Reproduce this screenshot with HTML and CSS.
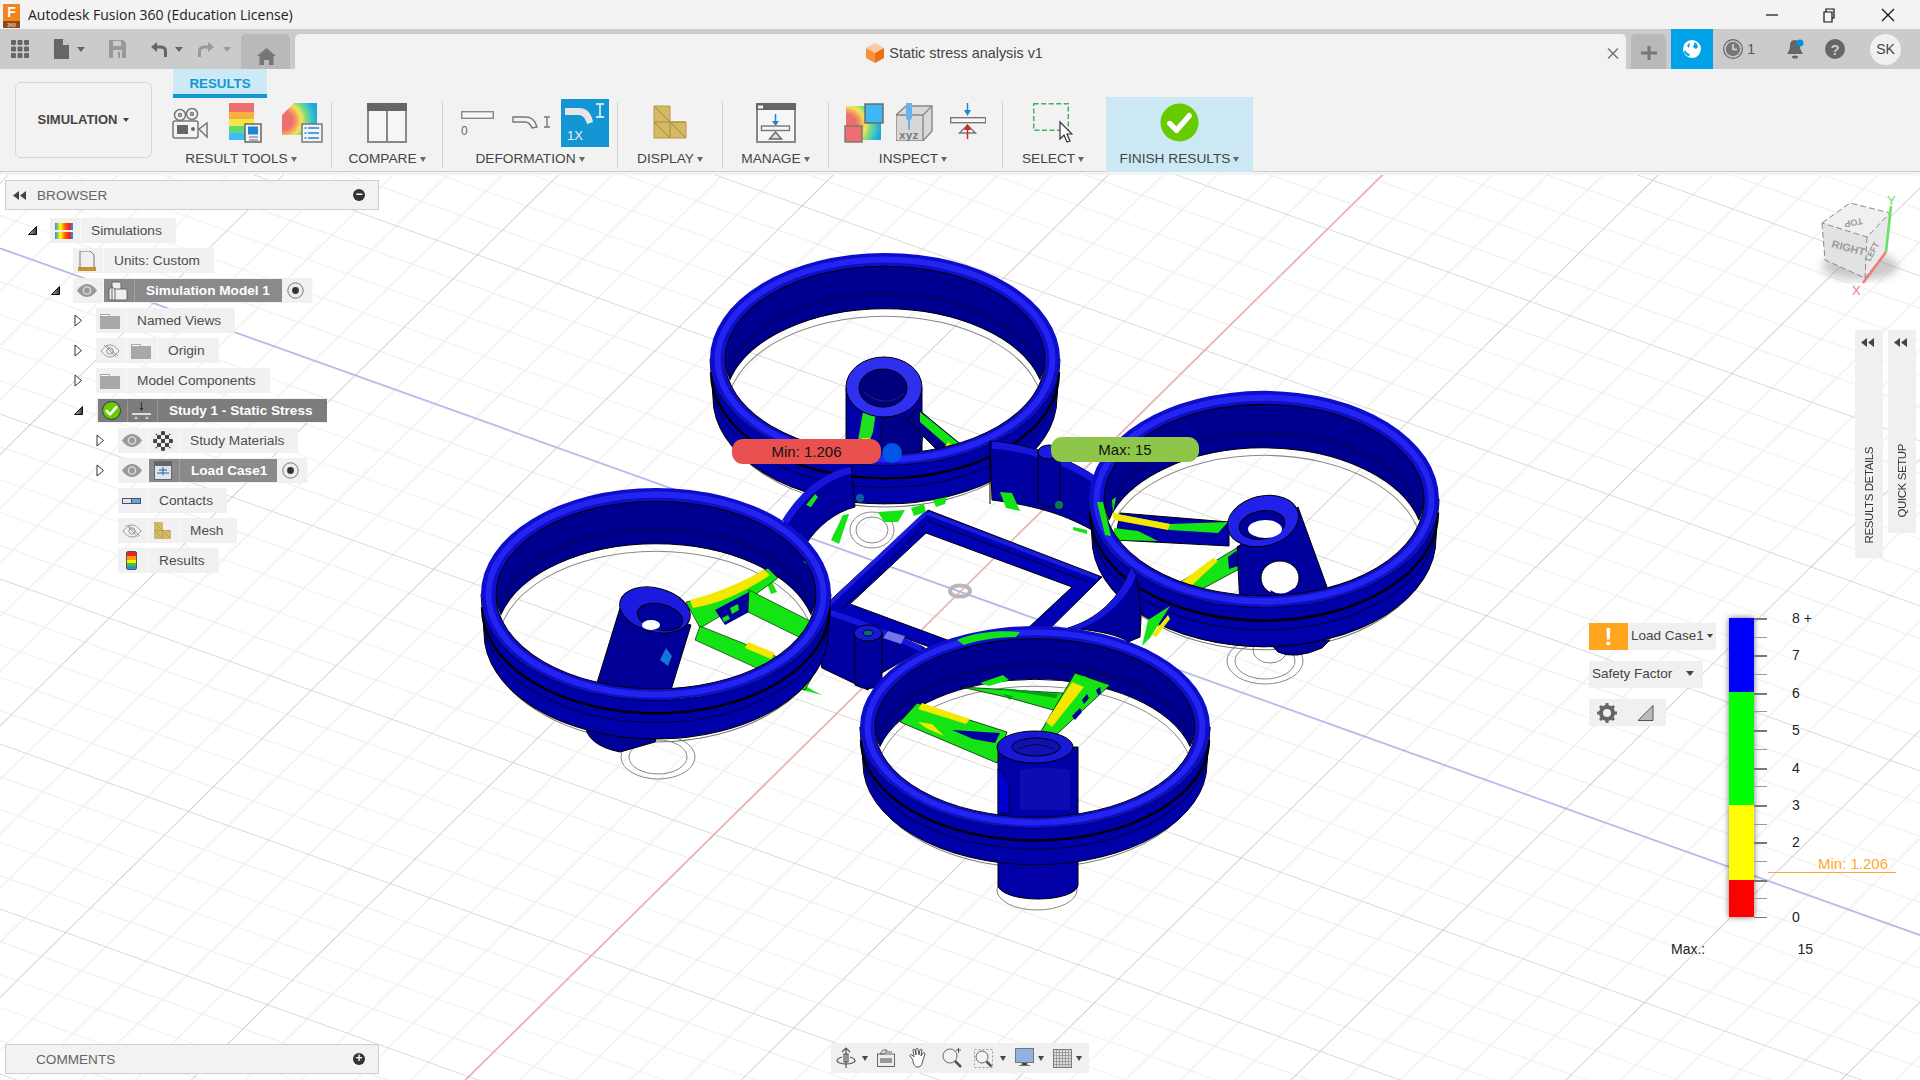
FILE: index.html
```html
<!DOCTYPE html>
<html lang="en">
<head>
  <meta charset="UTF-8">
  <title>Autodesk Fusion 360 (Education License)</title>
  <link rel="stylesheet" href="styles.css">
</head>
<body>
  <!-- shared icons -->
  <svg class="sprite" width="0" height="0">
    <defs>
      <linearGradient id="heatside" x1="0" y1="0" x2="1" y2="0">
        <stop offset="0" stop-color="#2a8fe0"/><stop offset=".3" stop-color="#ff0"/><stop offset=".55" stop-color="#f60"/><stop offset=".8" stop-color="#e22"/><stop offset="1" stop-color="#2a8fe0"/>
      </linearGradient>
      <linearGradient id="sharp" x1="0" y1="0" x2="1" y2="0">
        <stop offset="0" stop-color="#bbb"/><stop offset="1" stop-color="#333"/>
      </linearGradient>
      <radialGradient id="contour" cx="0" cy=".55" r="1">
        <stop offset=".3" stop-color="#ee6f6f"/><stop offset=".42" stop-color="#f4a35c"/><stop offset=".55" stop-color="#f3e45a"/><stop offset=".7" stop-color="#7ddc7a"/><stop offset=".85" stop-color="#3fc4c4"/><stop offset="1" stop-color="#1fa8d8"/>
      </radialGradient>
      <pattern id="checks" width="8" height="8" patternUnits="userSpaceOnUse">
        <rect width="8" height="8" fill="#eee"/><rect width="4" height="4" fill="#444"/><rect x="4" y="4" width="4" height="4" fill="#444"/>
      </pattern>
      <symbol id="eye" viewBox="0 0 20 13"><path d="M0 6.500C3 2 7 0 10 0s7 2 10 6.500C17 11 13 13 10 13S3 11 0 6.500z" fill="#999"/><circle cx="10" cy="6.500" r="3.600" fill="none" stroke="#ddd" stroke-width="1.400"/></symbol>
      <symbol id="eye-off" viewBox="0 0 20 14"><path d="M1 7c3-4 6-6 9-6s6 2 9 6c-3 4-6 6-9 6S4 11 1 7z" fill="none" stroke="#999"/><circle cx="10" cy="7" r="3.200" fill="none" stroke="#999"/><path d="M4 1l12 12M6 1l12 11" stroke="#999"/></symbol>
      <symbol id="folder" viewBox="0 0 20 16"><path d="M0 1h10v2h10v13H0z" fill="#a8a8a8"/><path d="M1 2.500h8" stroke="#fff"/></symbol>
      <symbol id="radio" viewBox="0 0 17 17"><circle cx="8.500" cy="8.500" r="7.700" fill="#ececec" stroke="#777"/><circle cx="8.500" cy="8.500" r="3.400" fill="#333"/></symbol>
      <symbol id="closed" viewBox="0 0 9 13"><path d="M1 1l6.500 5.500L1 12z" fill="#fff" stroke="#333"/></symbol>
      <symbol id="open" viewBox="0 0 9 9"><path d="M.5 8.500L8.500.5v8z" fill="url(#sharp)" stroke="#111"/></symbol>
      <symbol id="mesh" viewBox="0 0 34 34"><path d="M1 1h16v16h16v16H1z" fill="#d4b863" stroke="#b79a48"/><path d="M1 17h32M17 17v16M1 1l32 32M1 17l16 16" stroke="#a58b41" fill="none"/></symbol>
      <symbol id="rewind" viewBox="0 0 13 9"><path d="M6 0v9L0 4.500zM13 0v9L7 4.500z" fill="#444"/></symbol>
      <symbol id="tick" viewBox="0 0 40 40"><circle cx="20" cy="20" r="19.500" fill="#66cc00"/><path d="M10 21l7 7 13-15" fill="none" stroke="#fff" stroke-width="5.500" stroke-linecap="round" stroke-linejoin="round"/></symbol>

      <!-- one duct of the drone, split so hub and struts sit between the two halves -->
      <g id="ring-back">
        <ellipse cy="38" rx="170" ry="107" fill="none" stroke="#777"/>
        <ellipse cy="50" rx="158" ry="92" fill="none" stroke="#888"/>
        <path d="M-155 20A160 92 0 1 1 155 20A160 92 0 0 0-155 20z" fill="#000090" stroke="#000"/>
        <path d="M-153 6A156 87 0 0 1 153 6" fill="none" stroke="#112" stroke-width=".8"/>
      </g>
      <g id="ring-front">
        <path d="M-175 0A175 104 0 0 0 175 0L172 38A172 104 0 0 1-172 38z" fill="#0000a8" stroke="#000"/>
        <path d="M-174 13A174 104 0 0 0 174 13" fill="none" stroke="#000" stroke-width="2.400"/>
        <path d="M-173 22A173 104 0 0 0 173 22" fill="none" stroke="#001" stroke-width=".8"/>
        <path d="M-175 0A175 104 0 1 0 175 0A175 104 0 1 0-175 0zM-160 1A160 92 0 1 0 160 1A160 92 0 1 0-160 1z" fill="#0d0dcc" fill-rule="evenodd"/>
        <ellipse cy=".5" rx="167.500" ry="98" fill="none" stroke="#2424f0" stroke-width="6"/>
        <ellipse cy="1" rx="160" ry="92" fill="none" stroke="#000"/>
      </g>
    </defs>
  </svg>

  <header class="titlebar">
    <svg class="app-logo" width="17" height="24" viewBox="0 0 17 24">
      <rect width="17" height="18" rx="1" fill="#f58220"/><rect y="17" width="17" height="7" fill="#8a4a1c"/>
      <text x="8.500" y="13" class="logo-f">F</text><text x="8.500" y="23" class="logo-360">360</text>
    </svg>
    <span class="app-title">Autodesk Fusion 360 (Education License)</span>
    <div class="win-controls">
      <svg width="58" height="16" viewBox="0 0 58 16"><path d="M23 8h12" stroke="#111" stroke-width="1.200"/></svg>
      <svg width="58" height="16" viewBox="0 0 58 16"><path d="M23 5h8v10h-8zM25 5V2h8v9h-2" fill="none" stroke="#111" stroke-width="1.200"/></svg>
      <svg width="58" height="16" viewBox="0 0 58 16"><path d="M23 2l12 12M35 2L23 14" stroke="#111" stroke-width="1.200"/></svg>
    </div>
  </header>

  <nav class="tabbar">
    <svg class="tb-apps" width="18" height="18" viewBox="0 0 18 18" fill="#666">
      <rect width="5" height="5" rx="1"/><rect x="6.500" width="5" height="5" rx="1"/><rect x="13" width="5" height="5" rx="1"/>
      <rect y="6.500" width="5" height="5" rx="1"/><rect x="6.500" y="6.500" width="5" height="5" rx="1"/><rect x="13" y="6.500" width="5" height="5" rx="1"/>
      <rect y="13" width="5" height="5" rx="1"/><rect x="6.500" y="13" width="5" height="5" rx="1"/><rect x="13" y="13" width="5" height="5" rx="1"/>
    </svg>
    <svg class="tb-file" width="16" height="20" viewBox="0 0 16 20"><path d="M1 0h9l6 6v14H1z" fill="#666"/><path d="M10 0v6h6" fill="#ccc"/></svg>
    <span class="caret tb-c1"></span>
    <svg class="tb-save" width="17" height="18" viewBox="0 0 17 18"><path d="M0 0h14l3 3v15H0z" fill="#999"/><path d="M4 1h8v5H4zM4 10h9v8H4z" fill="#cbcbcb"/><path d="M9 12h2v6H9z" fill="#999"/></svg>
    <svg class="tb-undo" width="16" height="15" viewBox="0 0 16 15"><path d="M14.500 15V9C14.500 6 12 5 9 5H3" fill="none" stroke="#666" stroke-width="3"/><path d="M6 0L0 5l6 5z" fill="#666"/></svg>
    <span class="caret tb-c2"></span>
    <svg class="tb-redo" width="16" height="15" viewBox="0 0 16 15"><path d="M1.500 15V9C1.500 6 4 5 7 5h6" fill="none" stroke="#999" stroke-width="3"/><path d="M10 0l6 5-6 5z" fill="#999"/></svg>
    <span class="caret caret-off tb-c3"></span>
    <div class="home-tab">
      <svg width="19" height="17" viewBox="0 0 19 17"><path d="M9.500 0L19 8h-2.500v9H12v-5H7v5H2.500V8H0z" fill="#777"/></svg>
    </div>
    <div class="doc-tab">
      <div class="doc-title">
        <svg width="18" height="20" viewBox="0 0 18 20"><path d="M9 0l9 5-9 5-9-5z" fill="#fdc9a0"/><path d="M0 5l9 5v10l-9-5z" fill="#f7913c"/><path d="M18 5l-9 5v10l9-5z" fill="#e96f10"/></svg>
        <span>Static stress analysis v1</span>
      </div>
      <svg class="doc-close" width="12" height="11" viewBox="0 0 12 11"><path d="M1 .5l10 10M11 .5l-10 10" stroke="#777" stroke-width="1.500"/></svg>
    </div>
    <div class="plus-tab">
      <svg width="16" height="14" viewBox="0 0 16 14"><path d="M6.500 0h3v5.500H16v3H9.500V14h-3V8.500H0v-3h6.500z" fill="#777"/></svg>
    </div>
    <div class="job-status">
      <svg width="20" height="20" viewBox="0 0 20 20"><path d="M10 1a9 9 0 1 1-.1 18 9 9 0 0 1 .1-18z" fill="#fff"/><path d="M5 7c1-2 2-3 3-3l-1 5zM13 3l-2 5 3 2 2-2c-.5-2-1.500-4-3-5zM3 11c1 2 3 4 5 4l-1 2c-2 0-4-2-5-4z" fill="#00a2e8"/></svg>
    </div>
    <svg class="tb-clock" width="20" height="20" viewBox="0 0 20 20"><circle cx="10" cy="10" r="9.400" fill="none" stroke="#666" stroke-width="1.200"/><circle cx="10" cy="10" r="7.200" fill="#777"/><path d="M10 5v5.500h4" fill="none" stroke="#ddd" stroke-width="1.500"/></svg>
    <span class="tb-count">1</span>
    <svg class="tb-bell" width="18" height="20" viewBox="0 0 18 20"><path d="M8 1c4 0 5 3 5 6 0 4 2 6 3 8H0c1-2 3-4 3-8 0-3 1-6 5-6z" fill="#666"/><ellipse cx="8" cy="18" rx="3" ry="1.500" fill="#666"/><circle cx="13" cy="4" r="3.500" fill="#0a8fdc"/></svg>
    <svg class="tb-help" width="20" height="20" viewBox="0 0 20 20"><circle cx="10" cy="10" r="10" fill="#666"/><text x="10" y="15.500" class="help-q">?</text></svg>
    <div class="avatar">SK</div>
  </nav>

  <section class="ribbon">
    <button class="workspace">SIMULATION<span class="caret caret-dark"></span></button>
    <div class="ribbon-tab">RESULTS</div>

    <div class="group g-tools">
      <div class="group-icons">
        <svg width="37" height="31" viewBox="0 0 37 31" fill="none" stroke="#777" stroke-width="1.500">
          <circle cx="8" cy="7" r="5.500"/><circle cx="8" cy="7" r="1.500"/><circle cx="20" cy="6" r="5.500"/><circle cx="20" cy="6" r="1.500"/>
          <rect x="1" y="13" width="25" height="17" rx="2" fill="#f4f4f4"/><rect x="5" y="17" width="11" height="9" fill="#666" stroke="none"/><circle cx="21" cy="21" r="2" fill="#666" stroke="none"/><path d="M27 21l8-6v14z"/>
        </svg>
        <svg width="33" height="40" viewBox="0 0 33 40">
          <rect width="25" height="9" fill="#ee6f6f"/><rect y="9" width="25" height="7" fill="#f5b042"/><rect y="16" width="25" height="7" fill="#f5e642"/><rect y="23" width="25" height="7" fill="#5fd97a"/><rect y="30" width="25" height="7" fill="#3dbcf5"/>
          <rect x="16" y="21" width="16" height="18" fill="#f4f4f4" stroke="#666" stroke-width="1.500"/><rect x="19" y="23.500" width="10" height="8" fill="#1a86d8"/><path d="M20 34h9M20 37h9" stroke="#666"/>
        </svg>
        <svg width="41" height="40" viewBox="0 0 41 40">
          <path d="M0 12L12 0h23v32H0z" fill="url(#contour)"/>
          <rect x="20" y="21" width="20" height="18" fill="#f4f4f4" stroke="#777" stroke-width="1.500"/><path d="M26 25h11M26 30h11M26 35h11" stroke="#1a86d8" stroke-width="1.500"/><path d="M22.500 25h2M22.500 30h2M22.500 35h2" stroke="#1a86d8" stroke-width="1.500"/>
        </svg>
      </div>
      <span class="group-label">RESULT TOOLS<span class="caret"></span></span>
    </div>

    <div class="group g-compare">
      <div class="group-icons">
        <svg width="40" height="40" viewBox="0 0 40 40"><rect x="1" y="1" width="38" height="38" fill="#f6f6f6" stroke="#888" stroke-width="2"/><rect width="40" height="8" fill="#666"/><path d="M20 8v31" stroke="#888" stroke-width="2"/></svg>
      </div>
      <span class="group-label">COMPARE<span class="caret"></span></span>
    </div>

    <div class="group g-deform">
      <div class="group-icons">
        <div class="deform-item">
          <svg width="33" height="8" viewBox="0 0 33 8"><rect x=".7" y=".7" width="31.600" height="6.600" fill="#f6f6f6" stroke="#888" stroke-width="1.400"/></svg>
          <span>0</span>
        </div>
        <svg class="deform-half" width="39" height="14" viewBox="0 0 39 14" fill="none" stroke="#777" stroke-width="1.400"><path d="M1 2h13c6 0 9 3 11 10l-5 1C18 8 16 7 13 7H1zM32 2h6M35 2v10M32 12h6"/></svg>
        <div class="deform-on">
          <svg width="46" height="25" viewBox="0 0 46 25"><path d="M4 6h14c7 0 12 4 14 14l-6 2c-2-7-5-9-9-9H4z" fill="#e6e6e6"/><path d="M35 2h8M39 2v13M35 15h8" fill="none" stroke="#fff" stroke-width="1.400"/></svg>
          <span>1X</span>
        </div>
      </div>
      <span class="group-label">DEFORMATION<span class="caret"></span></span>
    </div>

    <div class="group g-display">
      <div class="group-icons"><svg width="34" height="34"><use href="#mesh"/></svg></div>
      <span class="group-label">DISPLAY<span class="caret"></span></span>
    </div>

    <div class="group g-manage">
      <div class="group-icons">
        <svg width="40" height="40" viewBox="0 0 40 40"><rect x="1" y="1" width="38" height="38" fill="#f6f6f6" stroke="#888" stroke-width="2"/><rect width="40" height="7" fill="#666"/><rect x="2" y="2.500" width="5" height="3" fill="#f6f6f6"/><path d="M19.500 11v9" stroke="#1a86d8" stroke-width="1.500"/><path d="M16 18h7l-3.500 5z" fill="#1a86d8"/><rect x="5.500" y="23" width="28" height="4.500" fill="#f6f6f6" stroke="#777" stroke-width="1.400"/><path d="M19.500 29l6 7h-12z" fill="#ddd" stroke="#666" stroke-width="1.400"/></svg>
      </div>
      <span class="group-label">MANAGE<span class="caret"></span></span>
    </div>

    <div class="group g-inspect">
      <div class="group-icons">
        <svg width="40" height="40" viewBox="0 0 40 40"><rect x="2" y="3" width="35" height="34" fill="url(#contour)"/><rect x="21" y="1" width="18" height="19" fill="#3db8f5" stroke="#666" stroke-width="1.400"/><rect x="1" y="23" width="17" height="16" fill="#ee6f6f" stroke="#777" stroke-width="1.400"/></svg>
        <svg width="37" height="38" viewBox="0 0 37 38"><path d="M0 12L10 3h26v25l-9 10H0z" fill="#d8d8d8" stroke="#888" stroke-width="1.400"/><path d="M0 12h27v26M27 12l9-9" fill="none" stroke="#888" stroke-width="1.400"/><path d="M10 0h6v15l-2 3v9h-2v-9l-2-3z" fill="#6bb2ea"/><text x="13" y="36" class="xyz">xyz</text></svg>
        <svg width="36" height="36" viewBox="0 0 36 36"><path d="M17.500 0v9" stroke="#1a86d8" stroke-width="1.500"/><path d="M14 7h7l-3.500 6z" fill="#1a86d8"/><rect x=".7" y="14.700" width="35" height="5" fill="#f6f6f6" stroke="#777" stroke-width="1.400"/><path d="M17.500 22l8 8h-16z" fill="#f6f6f6" stroke="#777" stroke-width="1.400"/><path d="M17.500 26v10" stroke="#d22" stroke-width="1.500"/><path d="M14 27h7l-3.500-6z" fill="#d22"/></svg>
      </div>
      <span class="group-label">INSPECT<span class="caret"></span></span>
    </div>

    <div class="group g-select">
      <div class="group-icons">
        <svg width="40" height="40" viewBox="0 0 40 40"><rect x=".7" y=".7" width="34.600" height="26.600" fill="none" stroke="#38b060" stroke-width="1.400" stroke-dasharray="5 2.500"/><path d="M27 19v17l4-4 3 7 3-1-3-7h5z" fill="#fff" stroke="#333" stroke-width="1.200"/></svg>
      </div>
      <span class="group-label">SELECT<span class="caret"></span></span>
    </div>

    <div class="group g-finish">
      <div class="group-icons"><svg width="39" height="39"><use href="#tick"/></svg></div>
      <span class="group-label">FINISH RESULTS<span class="caret"></span></span>
    </div>
  </section>

  <main class="viewport">
    <svg class="scene" viewBox="0 175 1920 905" width="1920" height="905">
      <defs>
        <pattern id="floor" width="200" height="200" patternUnits="userSpaceOnUse" patternTransform="matrix(1.009 .361 -.6135 .6055 960 592)">
          <path d="M40 0v200M80 0v200M120 0v200M160 0v200M0 40h200M0 80h200M0 120h200M0 160h200" fill="none" stroke="#eeeeee" stroke-width="1.300"/>
          <path d="M0 0h200M0 0v200" fill="none" stroke="#cbcbcb" stroke-width="1.700"/>
        </pattern>
        <filter id="soft"><feGaussianBlur stdDeviation="4"/></filter>
      </defs>
      <rect y="175" width="1920" height="905" fill="#fff"/>
      <rect y="175" width="1920" height="905" fill="url(#floor)"/>
      <path d="M0 248L1920 935" stroke="#aaaaf6" stroke-width="1.200"/>
      <path d="M1383 174L465 1080" stroke="#f4a6a6" stroke-width="1.200"/>
      <ellipse cx="960" cy="591" rx="10" ry="5.500" fill="none" stroke="#b8b8b8" stroke-width="4"/>

      <!-- ghost feet under the hubs -->
      <g class="ghost">
        <ellipse cx="1265" cy="661" rx="38" ry="23"/><ellipse cx="1265" cy="661" rx="30" ry="18"/><ellipse cx="1270" cy="650" rx="17" ry="13"/>
        <ellipse cx="658" cy="757" rx="37" ry="22"/><ellipse cx="658" cy="757" rx="29" ry="17"/>
        <ellipse cx="1037" cy="890" rx="40" ry="20"/>
        <ellipse cx="872" cy="530" rx="22" ry="18"/><ellipse cx="872" cy="530" rx="16" ry="13"/>
      </g>

      <!-- centre frame -->
      <path d="M928 510L1102 577L1004 674L822 608zM926 533L1072 587L996 658L850 604z" fill="#0000b4" fill-rule="evenodd" stroke="#000"/>
      <path d="M928 521L1088 582M842 609L926 524" fill="none" stroke="#000" stroke-width=".8"/>
      <path d="M927 513L1098 578M826 607L926 513" fill="none" stroke="#1c1cdc" stroke-width="4"/>

      <!-- back duct -->
      <use href="#ring-back" transform="translate(885 359) scale(1 1.020)"/>
      <path d="M846 388V470H922V388z" fill="#0000a6" stroke="#000"/>
      <path d="M882 420l-6 50h40l8-38-24-22z" fill="#000088" stroke="#001" stroke-width=".6"/>
      <path d="M863 412l13 0-3 20-5 14-11 0z" fill="#20e020"/><path d="M862 438h8l-3 8h-7z" fill="#f2e400"/>
      <path d="M917 408l14 12 54 44-28 6-50-50z" fill="#000088" stroke="#000"/>
      <path d="M920 412l10 8 42 34-6 8-46-40z" fill="#14e314"/><path d="M948 442l14 12-4 6-14-12z" fill="#f4e800"/>
      <ellipse cx="884" cy="387" rx="38" ry="30" fill="#2f2ff0" stroke="#000"/>
      <ellipse cx="883" cy="388" rx="24" ry="19" fill="#00007e" stroke="#000"/>
      <path d="M864 392c6 6 14 9 22 9 8 0 13-3 18-8" fill="none" stroke="#334" stroke-width=".7"/>
      <use href="#ring-front" transform="translate(885 359) scale(1 1.020)"/>
      <path d="M851 466v37M990 442v62" stroke="#000"/>
      <path d="M878 512l27-2-7 12h-14zM911 508l13-4 2 8-12 4zM933 500l14-3-2 7-9 3z" fill="#14e314"/>
      <circle cx="892" cy="453" r="10" fill="#0055e6"/>

      <!-- arms around the top duct -->
      <path d="M783 524C800 495 825 474 851 466L855 507C835 512 818 526 806 544z" fill="#0000a0" stroke="#000"/>
      <path d="M785 522C802 495 825 476 851 470" fill="none" stroke="#1616dc" stroke-width="7"/>
      <path d="M806 505l9-11 3 3-7 10zM831 540l12-25 6-1-10 30z" fill="#14e314"/>
      <circle cx="860" cy="498" r="4" fill="#0a5ca0"/>
      <path d="M990 441C1030 444 1070 458 1100 480L1092 530C1060 512 1030 505 992 500z" fill="#0000a0" stroke="#000"/>
      <path d="M992 445C1030 448 1070 462 1098 482" fill="none" stroke="#1616dc" stroke-width="7"/>
      <path d="M1000 492l12 1 8 18-14-3zM1073 527l14 3v4l-14-4z" fill="#14e314"/>
      <path d="M1038 450V503Q1049 511 1060 503V450z" fill="#00009c" stroke="#000"/>
      <ellipse cx="1049" cy="452" rx="11" ry="7" fill="#1c1ce0" stroke="#000"/>
      <circle cx="1059" cy="505" r="4" fill="#0a7a50"/>

      <!-- right duct -->
      <use href="#ring-back" transform="translate(1264 499) scale(1 1.040)"/>
      <path d="M1120 513L1229 522V546L1115 540z" fill="#0000a6" stroke="#000"/>
      <path d="M1112 513L1170 524L1228 522L1218 533L1170 530L1120 520z" fill="#14e314"/><path d="M1112 513L1170 524L1168 530L1114 520z" fill="#f4e800"/>
      <path d="M1114 528l24 3 20 10-44-1z" fill="#14e314"/>
      <path d="M1240 546L1177 584L1200 590L1245 566z" fill="#14e314" stroke="#000" stroke-width=".7"/><path d="M1180 583L1213 558L1218 561L1190 587z" fill="#f4e800"/><path d="M1228 557l8-6 5 14-12 4z" fill="#00009a"/>
      <path d="M1232 600Q1240 610 1240 620L1262 620V605z" fill="#0a44d0"/>
      <path d="M1237 547L1298 507L1327 587L1300 606H1240z" fill="#00009c" stroke="#000"/>
      <ellipse cx="1280" cy="578" rx="19" ry="17" fill="#fff" stroke="#000"/>
      <path d="M1270 590q12 8 24-2l-2 10q-12 4-20-2z" fill="#0000b0"/>
      <ellipse cx="1263" cy="521" rx="36" ry="25" transform="rotate(-14 1263 521)" fill="#2020e8" stroke="#000"/>
      <ellipse cx="1262" cy="525" rx="23" ry="14" transform="rotate(-10 1262 525)" fill="#00009a" stroke="#000"/>
      <ellipse cx="1265" cy="529" rx="17" ry="9" fill="#fff"/>
      <path d="M1267 640H1330L1322 648Q1295 660 1278 652z" fill="#00009a" stroke="#000"/>
      <use href="#ring-front" transform="translate(1264 499) scale(1 1.040)"/>
      <path d="M1097 502l6 0 8 34-6-1zM1112 500l4-3-3 16z" fill="#14e314"/>

      <!-- struts between the ducts -->
      <path d="M1148 620l22-14-20 32-8 8z" fill="#14e314"/><path d="M1152 635l16-20 2 4-14 18z" fill="#f4e800"/>
      <path d="M800 683l14 8 8 4-24-6z" fill="#14e314"/>

      <!-- arms around the bottom duct -->
      <path d="M1068 628C1095 620 1120 600 1131 567C1137 575 1140 590 1141 618L1140 637L1128 642C1120 635 1095 630 1068 628z" fill="#00009a" stroke="#000"/>
      <path d="M1068 628C1095 620 1120 600 1131 567L1136 575C1128 600 1100 624 1072 631z" fill="#1616dc"/>
      <path d="M822 608C860 620 895 635 925 648L880 674L868 690L822 668L815 640z" fill="#0000a0" stroke="#000"/>
      <path d="M822 610C860 622 895 637 922 649" fill="none" stroke="#1616dc" stroke-width="6"/>
      <path d="M888 631l17 5-4 8-18-6z" fill="#8f8ff0" opacity=".8"/>
      <path d="M855 633V685Q868 692 882 685V633z" fill="#00009c" stroke="#000"/>
      <ellipse cx="868" cy="633" rx="14" ry="8" fill="#1818d8" stroke="#000"/>
      <ellipse cx="868" cy="633" rx="5" ry="3" fill="#00707a" stroke="#000"/>

      <!-- left duct -->
      <use href="#ring-back" transform="translate(656 594) scale(1 1.020)"/>
      <path d="M806 556c10 8 16 22 18 34l-5 0c-2-12-8-22-15-28zM765 578l7 4 5 10-6 2z" fill="#14e314"/>
      <path d="M686 602C715 596 742 584 768 568L778 578L748 600L700 628z" fill="#14e314" stroke="#000" stroke-width=".6"/>
      <path d="M690 600C715 594 742 582 764 570L770 575C745 592 718 604 693 608z" fill="#f4e800"/>
      <path d="M715 610L749 592L749 612L725 625z" fill="#00009a"/>
      <path d="M730 608l8-4 1 6-7 4zM722 618l6-3 2 4-6 3z" fill="#14e314"/>
      <path d="M749 590L812 622L815 645L748 612z" fill="#14e314" stroke="#000" stroke-width=".6"/>
      <path d="M700 626L815 672L805 690L695 640z" fill="#14e314" stroke="#000" stroke-width=".6"/>
      <path d="M748 642L775 653L771 659L745 648z" fill="#f4e800"/>
      <path d="M620 608L585 722Q585 745 620 752L655 742L691 625z" fill="#000096" stroke="#000"/>
      <path d="M660 660l6-12 6 8-4 10z" fill="#1474d8"/>
      <ellipse cx="655" cy="610" rx="36" ry="22" transform="rotate(14 655 610)" fill="#1a1ae0" stroke="#000"/>
      <ellipse cx="660" cy="617" rx="23" ry="13" transform="rotate(14 660 617)" fill="#00009a" stroke="#000"/>
      <ellipse cx="651" cy="625" rx="9" ry="5" fill="#fff"/>
      <use href="#ring-front" transform="translate(656 594) scale(1 1.020)"/>

      <!-- front duct -->
      <use href="#ring-back" transform="translate(1035 727) scale(1 .970)"/>
      <path d="M980 683l23-8 6 5-20 6z" fill="#14e314"/>
      <path d="M961 687L1063 693L1060 712L1010 698z" fill="#14e314" stroke="#000" stroke-width=".7"/>
      <path d="M1000 688l58 6-2 4-52-8zM1003 694l10 2-3 4z" fill="#00a012"/>
      <path d="M917 703L1007 732L997 763L900 722z" fill="#14e314" stroke="#000" stroke-width=".7"/>
      <path d="M922 703L970 719L966 724L918 709z" fill="#f4e800"/><path d="M918 722l14 2 12 12-18-8z" fill="#f4e800"/>
      <path d="M952 730l48 3-5 10-22-4z" fill="#0000a0"/>
      <path d="M1040 733L1075 673L1110 685L1056 735z" fill="#14e314" stroke="#000" stroke-width=".7"/>
      <path d="M1046 722L1072 682L1084 687L1052 727z" fill="#f4e800"/>
      <path d="M1074 682l10-6 8 4-4 6z" fill="#14e314"/>
      <path d="M1072 716l8-8 2 4-7 8zM1082 700l5-6 2 4-5 6zM1096 690l4-3 1 6-3 2z" fill="#00009a"/>
      <path d="M998 747V885A40 14 0 0 0 1078 885V747z" fill="#0000a6" stroke="#000"/>
      <path d="M1020 770c20-3 30-3 50 0v40h-50z" fill="#0c0cb4"/>
      <path d="M998 768q10 8 11 20v25h-11z" fill="#0000d0" stroke="#000" stroke-width=".6"/>
      <ellipse cx="1035" cy="747" rx="38" ry="16" fill="#1818d8" stroke="#000"/>
      <ellipse cx="1036" cy="747" rx="24" ry="9" fill="#1010b0" stroke="#000"/>
      <path d="M1018 749q18-9 36 0" fill="none" stroke="#000" stroke-width=".6"/>
      <use href="#ring-front" transform="translate(1035 727) scale(1 .970)"/>
      <path d="M957 640C975 632 1000 630 1020 632L1016 637C995 637 975 641 964 645z" fill="#14e314"/>

      <!-- view cube -->
      <ellipse cx="1860" cy="266" rx="38" ry="14" fill="#888" opacity=".45" filter="url(#soft)"/>
      <path d="M1822 223L1850 203L1890 213L1867 237z" fill="#f0f0f0"/>
      <path d="M1822 223L1867 237L1865 278L1825 260z" fill="#e2e2e2"/>
      <path d="M1867 237L1890 213L1886 252L1865 278z" fill="#e9e9e9"/>
      <path d="M1822 223L1850 203L1890 213L1867 237zM1822 223L1825 260L1865 278L1886 252L1890 213M1867 237L1865 278" fill="none" stroke="#8a8a8a" stroke-dasharray="6 3"/>
      <text class="cube-label" transform="translate(1831 247) rotate(15) scale(1 .95)">RIGHT</text>
      <text class="cube-label cube-small" transform="translate(1870 262) rotate(-62) scale(.9 1)">LEFT</text>
      <text class="cube-label cube-small" transform="translate(1862 218) rotate(170)">TOP</text>
      <path d="M1886 252L1891 206" stroke="#66e266" stroke-width="2.500"/>
      <path d="M1886 252L1863 283" stroke="#f47a7a" stroke-width="2.500"/>
      <text x="1887" y="205" class="axis axis-y">Y</text>
      <text x="1852" y="295" class="axis axis-x">X</text>
    </svg>

    <aside class="panel browser">
      <div class="panel-head">
        <svg width="13" height="9"><use href="#rewind"/></svg>
        <span>BROWSER</span>
        <i class="round-btn">&minus;</i>
      </div>
      <div class="tree">
        <div class="row d0">
          <svg class="toggle" width="9" height="9"><use href="#open"/></svg>
          <div class="chip">
            <span class="cell"><svg width="18" height="16" viewBox="0 0 18 16"><rect width="18" height="7" fill="url(#heatside)"/><rect y="9" width="18" height="7" fill="url(#heatside)"/></svg></span>
            <span class="text">Simulations</span>
          </div>
        </div>
        <div class="row d1">
          <span class="toggle"></span>
          <div class="chip">
            <span class="cell"><svg width="18" height="20" viewBox="0 0 18 20"><path d="M2 0h10l4 4v13H2z" fill="#eef0f4" stroke="#777"/><rect y="16" width="18" height="4" fill="#c8922e"/></svg></span>
            <span class="text">Units: Custom</span>
          </div>
        </div>
        <div class="row d1">
          <svg class="toggle" width="9" height="9"><use href="#open"/></svg>
          <div class="chip">
            <span class="cell"><svg width="20" height="13"><use href="#eye"/></svg></span>
            <div class="chip-dark">
              <span class="cell"><svg width="20" height="20" viewBox="0 0 20 20"><path d="M1 8l3-2V1h9v7h5c1 0 1 1 1 1v10H1z" fill="#eee" stroke="#666"/><path d="M4 6v13M13 8H7v11M7 8l-3-2" fill="none" stroke="#666"/></svg></span>
              <span class="text bold">Simulation Model 1</span>
            </div>
            <span class="cell"><svg width="17" height="17"><use href="#radio"/></svg></span>
          </div>
        </div>
        <div class="row d2">
          <svg class="toggle" width="9" height="13"><use href="#closed"/></svg>
          <div class="chip">
            <span class="cell"><svg width="20" height="16"><use href="#folder"/></svg></span>
            <span class="text">Named Views</span>
          </div>
        </div>
        <div class="row d2">
          <svg class="toggle" width="9" height="13"><use href="#closed"/></svg>
          <div class="chip">
            <span class="cell"><svg width="20" height="14"><use href="#eye-off"/></svg></span>
            <span class="cell"><svg width="20" height="16"><use href="#folder"/></svg></span>
            <span class="text">Origin</span>
          </div>
        </div>
        <div class="row d2">
          <svg class="toggle" width="9" height="13"><use href="#closed"/></svg>
          <div class="chip">
            <span class="cell"><svg width="20" height="16"><use href="#folder"/></svg></span>
            <span class="text">Model Components</span>
          </div>
        </div>
        <div class="row d2">
          <svg class="toggle" width="9" height="9"><use href="#open"/></svg>
          <div class="chip chip-study">
            <div class="chip-dark">
              <span class="cell"><svg width="19" height="19"><use href="#tick"/><circle cx="9.500" cy="9.500" r="9" fill="none" stroke="#335"/></svg></span>
              <span class="cell"><svg width="19" height="18" viewBox="0 0 19 18"><path d="M9.500 0v8" stroke="#333"/><path d="M7.500 6h4l-2 3z" fill="#333"/><path d="M0 11h19v2H0z" fill="#ddd"/><path d="M4 14l2 3H2zM15 14l2 3h-4z" fill="#ccc"/></svg></span>
              <span class="text bold">Study 1 - Static Stress</span>
            </div>
          </div>
        </div>
        <div class="row d3">
          <svg class="toggle" width="9" height="13"><use href="#closed"/></svg>
          <div class="chip">
            <span class="cell"><svg width="20" height="13"><use href="#eye"/></svg></span>
            <span class="cell"><svg width="20" height="20"><circle cx="10" cy="10" r="10" fill="url(#checks)"/></svg></span>
            <span class="text">Study Materials</span>
          </div>
        </div>
        <div class="row d3">
          <svg class="toggle" width="9" height="13"><use href="#closed"/></svg>
          <div class="chip">
            <span class="cell"><svg width="20" height="13"><use href="#eye"/></svg></span>
            <div class="chip-dark">
              <span class="cell"><svg width="18" height="19" viewBox="0 0 18 19"><rect x=".5" y=".5" width="17" height="18" fill="#dce4ee" stroke="#666"/><rect x="1" y="1" width="16" height="4" fill="#666"/><path d="M9 6v8M5 9h8M3 12h12" stroke="#2b5c9e"/></svg></span>
              <span class="text bold load-text">Load Case1</span>
            </div>
            <span class="cell"><svg width="17" height="17"><use href="#radio"/></svg></span>
          </div>
        </div>
        <div class="row d3">
          <span class="toggle"></span>
          <div class="chip">
            <span class="cell"><svg width="19" height="6" viewBox="0 0 19 6"><rect x=".5" y=".5" width="9" height="5" fill="#dde4f0" stroke="#456"/><rect x="9.500" y=".5" width="9" height="5" fill="#6f9fdc" stroke="#456"/></svg></span>
            <span class="text">Contacts</span>
          </div>
        </div>
        <div class="row d3">
          <span class="toggle"></span>
          <div class="chip">
            <span class="cell"><svg width="20" height="14"><use href="#eye-off"/></svg></span>
            <span class="cell"><svg width="17" height="17"><use href="#mesh"/></svg></span>
            <span class="text">Mesh</span>
          </div>
        </div>
        <div class="row d3">
          <span class="toggle"></span>
          <div class="chip">
            <span class="cell"><svg width="11" height="19" viewBox="0 0 11 19"><rect x=".5" y=".5" width="10" height="18" rx="1.500" fill="#fff" stroke="#555"/><rect x="1" y="1" width="9" height="4" fill="#e22"/><rect x="1" y="5" width="9" height="4" fill="#f90"/><rect x="1" y="9" width="9" height="3" fill="#fe0"/><rect x="1" y="12" width="9" height="3" fill="#3c3"/><rect x="1" y="15" width="9" height="3" fill="#38d"/></svg></span>
            <span class="text">Results</span>
          </div>
        </div>
      </div>
    </aside>

    <aside class="panel comments">
      <div class="panel-head">
        <span>COMMENTS</span>
        <i class="round-btn">+</i>
      </div>
    </aside>

    <div class="probe probe-min">Min: 1.206</div>
    <div class="probe probe-max">Max: 15</div>

    <div class="side-tabs">
      <div class="side-tab tab-details"><svg width="13" height="9"><use href="#rewind"/></svg><span>RESULTS DETAILS</span></div>
      <div class="side-tab tab-setup"><svg width="13" height="9"><use href="#rewind"/></svg><span>QUICK SETUP</span></div>
    </div>

    <div class="legend-controls">
      <div class="lc-row">
        <span class="warn">!</span>
        <span class="lc-select lc-load">Load Case1<span class="caret caret-dark"></span></span>
      </div>
      <div class="lc-row lc-select lc-type">Safety Factor<span class="caret caret-dark"></span></div>
      <div class="lc-row lc-tools">
        <svg width="20" height="20" viewBox="0 0 20 20"><circle cx="10" cy="10" r="6" fill="none" stroke="#666" stroke-width="4"/><path d="M10 0v4M10 16v4M0 10h4M16 10h4M3 3l3 3M14 14l3 3M17 3l-3 3M6 14l-3 3" stroke="#666" stroke-width="3"/></svg>
        <svg width="16" height="16" viewBox="0 0 16 16"><path d="M0 15.500L15 .5v15z" fill="#bbb" stroke="#555"/></svg>
      </div>
    </div>

    <div class="legend-scale">
      <div class="bar"><i class="seg-blue"></i><i class="seg-green"></i><i class="seg-yellow"></i><i class="seg-red"></i></div>
      <div class="ticks"></div>
      <div class="labels">
        <span>8 +</span><span>7</span><span>6</span><span>5</span><span>4</span><span>3</span><span>2</span><span class="label-gap"></span><span>0</span>
      </div>
      <div class="min-mark">Min: 1.206</div>
    </div>
    <div class="legend-max"><span>Max.:</span><span>15</span></div>

    <div class="navbar">
      <svg class="nav-orbit" width="20" height="22" viewBox="0 0 20 22" fill="none" stroke="#555" stroke-width="1.200"><path d="M10 1v20M6 5l4-4 4 4M10 7H8v8h4V7z"/><path d="M6 10c-3 1-5 2-5 3.500C1 15.500 5 17 10 17s9-1.500 9-3.500c0-1.500-2-2.500-5-3.500"/></svg>
      <span class="caret caret-dark nav-c1"></span>
      <svg class="nav-look" width="18" height="18" viewBox="0 0 18 18"><rect x=".5" y="5" width="17" height="12.500" fill="#eee" stroke="#666"/><rect x="3" y="9" width="12" height="5" fill="#999"/><path d="M3 5l3-4h4l-3 4zM9 3h6" fill="none" stroke="#666"/></svg>
      <svg class="nav-hand" width="19" height="20" viewBox="0 0 19 20" fill="#fff" stroke="#555"><path d="M4 12L1 8c-.5-1 1-2 2-1l2 2L4 2c0-1 2-1 2 0l1 5 0-6c0-1 2-1 2 0l1 6 1-5c0-1 2-1 2 0l-1 6 2-3c.5-1 2 0 2 1l-2 6c-1 3-1 6-4 7H8c-2 0-3-2-4-5z"/></svg>
      <svg class="nav-zoom" width="20" height="20" viewBox="0 0 20 20" fill="none"><circle cx="8" cy="8" r="7" fill="#eef4f8" stroke="#666"/><path d="M13 13l6 6" stroke="#555" stroke-width="2.500"/><path d="M14 2h5M16.500 0v5" stroke="#555"/></svg>
      <svg class="nav-fit" width="19" height="19" viewBox="0 0 19 19" fill="none"><path d="M.5.5h18v18H.5z" stroke="#999" stroke-dasharray="2 2"/><circle cx="8" cy="8" r="6" fill="#eef4f8" stroke="#666"/><path d="M12.500 12.500l5 5" stroke="#555" stroke-width="2.500"/></svg>
      <span class="caret caret-dark nav-c2"></span>
      <svg class="nav-display" width="19" height="20" viewBox="0 0 19 20"><rect x=".5" y=".5" width="18" height="14" fill="#8fb2e0" stroke="#777"/><path d="M7 15h5v2H7zM4 17.500h11" stroke="#777"/></svg>
      <span class="caret caret-dark nav-c3"></span>
      <svg class="nav-grid" width="19" height="19" viewBox="0 0 19 19"><rect x=".5" y=".5" width="18" height="18" fill="#ddd" stroke="#777"/><path d="M3.500 0v19M6.500 0v19M9.500 0v19M12.500 0v19M15.500 0v19M0 3.500h19M0 6.500h19M0 9.500h19M0 12.500h19M0 15.500h19" stroke="#888" stroke-width=".7"/></svg>
      <span class="caret caret-dark nav-c4"></span>
    </div>
  </main>
</body>
</html>
```
FILE: styles.css
```css
* {
  box-sizing: border-box;
  margin: 0;
  padding: 0;
}

html, body {
  width: 1920px;
  height: 1080px;
  overflow: hidden;
}

body {
  font-family: "Liberation Sans", Arial, sans-serif;
  color: #444;
  background: #fff;
  display: flex;
  flex-direction: column;
}

.sprite {
  position: absolute;
}

.caret {
  display: inline-block;
  width: 0;
  height: 0;
  border-left: 4px solid transparent;
  border-right: 4px solid transparent;
  border-top: 5px solid #666;
  vertical-align: middle;
}

.caret-dark {
  border-top-color: #444;
}

.caret-off {
  border-top-color: #999;
}

/* title bar */
.titlebar {
  height: 29px;
  flex: none;
  display: flex;
  align-items: center;
  background: #f3f3f3;
}

.app-logo {
  margin: 3px 0 0 3px;
}

.logo-f {
  font: bold 14px "Liberation Sans", sans-serif;
  fill: #fff;
  text-anchor: middle;
}

.logo-360 {
  font: bold 5px "Liberation Sans", sans-serif;
  fill: #f0c8a0;
  text-anchor: middle;
}

.app-title {
  margin-left: 8px;
  font: 14px "Open Sans", sans-serif;
  color: #222;
}

.win-controls {
  margin-left: auto;
  margin-right: 3px;
  display: flex;
}

/* tab bar */
.tabbar {
  height: 40px;
  flex: none;
  display: flex;
  align-items: center;
  background: #cbcbcb;
}

.tb-apps { margin-left: 11px; }
.tb-file { margin-left: 24px; }
.tb-c1 { margin-left: 8px; }
.tb-save { margin-left: 24px; }
.tb-undo { margin-left: 25px; }
.tb-c2 { margin-left: 8px; }
.tb-redo { margin-left: 15px; }
.tb-c3 { margin-left: 9px; }

.home-tab,
.plus-tab {
  align-self: flex-end;
  height: 35px;
  background: #b9b9b9;
  border-radius: 5px 5px 0 0;
  display: flex;
  align-items: center;
  justify-content: center;
}

.home-tab {
  width: 49px;
  margin-left: 10px;
  padding: 9px 0 0 2px;
}

.doc-tab {
  flex: 1;
  align-self: flex-end;
  height: 35px;
  margin-left: 5px;
  padding: 3px 7px 0 7px;
  background: #f2f2f2;
  border-radius: 5px 5px 0 0;
  display: flex;
  align-items: center;
}

.doc-title {
  flex: 1;
  display: flex;
  justify-content: center;
  align-items: center;
  gap: 5px;
  font-size: 14.4px;
  color: #444;
}

.plus-tab {
  width: 35px;
  margin-left: 5px;
  padding-top: 3px;
}

.job-status {
  align-self: stretch;
  width: 42px;
  margin-left: 5px;
  background: #00a2e8;
  display: flex;
  align-items: center;
  justify-content: center;
}

.tb-clock { margin-left: 10px; }

.tb-count {
  margin-left: 4px;
  font-size: 14px;
  color: #555;
}

.tb-bell { margin-left: 32px; }
.tb-help { margin-left: 20px; }

.help-q {
  font: bold 15px "Liberation Sans", sans-serif;
  fill: #cbcbcb;
  text-anchor: middle;
}

.avatar {
  width: 31px;
  height: 31px;
  margin: 0 19px 0 25px;
  border-radius: 50%;
  background: #f0f0f0;
  font-size: 14px;
  line-height: 31px;
  text-align: center;
  color: #444;
}

/* ribbon */
.ribbon {
  position: relative;
  height: 106px;
  flex: none;
  display: flex;
  align-items: flex-start;
  background: #f2f2f2;
  border-bottom: 3px solid #f3f3f3;
  box-shadow: inset 0 -1px 0 #cdcdcd;
}

.workspace {
  width: 137px;
  height: 76px;
  margin: 13px 1px 0 15px;
  padding-bottom: 2px;
  background: #f2f2f2;
  border: 1px solid #d6d6d6;
  border-radius: 6px;
  font: bold 13px "Liberation Sans", sans-serif;
  color: #444;
}

.workspace .caret {
  margin-left: 6px;
  border-left-width: 3px;
  border-right-width: 3px;
  border-top-width: 4px;
}

.ribbon-tab {
  position: absolute;
  left: 173px;
  top: 0;
  width: 94px;
  height: 29px;
  padding-top: 7px;
  background: #cde9f5;
  border-bottom: 4px solid #1596d4;
  font-size: 13.3px;
  font-weight: bold;
  color: #1596d4;
  text-align: center;
}

.group {
  height: 66px;
  margin-top: 33px;
  border-right: 1px solid #d2d2d2;
  display: flex;
  flex-direction: column;
  align-items: center;
}

.g-tools { width: 179px; }
.g-compare { width: 111px; }
.g-deform { width: 175px; }
.g-display { width: 105px; }
.g-manage { width: 106px; }
.g-inspect { width: 174px; }
.g-select { width: 103px; border: none; }

.g-finish {
  width: 147px;
  height: 75px;
  margin-top: 28px;
  padding-top: 5px;
  border: none;
  background: #cde8f5;
}

.group-icons {
  height: 49px;
  padding-top: 1px;
  display: flex;
  align-items: flex-start;
}

.group-label {
  font-size: 13.7px;
  line-height: 16px;
  color: #444;
  white-space: nowrap;
}

.group-label .caret {
  margin-left: 3px;
  border-left-width: 3px;
  border-right-width: 3px;
  border-top-width: 5px;
}

.g-tools .group-icons {
  padding-left: 8px;
  gap: 20px;
}

.g-tools .group-icons svg:first-child {
  margin: 5px 0 0 3px;
}

.g-tools .group-label {
  margin-right: 2px;
}

.g-display .group-icons {
  padding-top: 3px;
}

.g-inspect .group-icons {
  margin-left: -2px;
  gap: 12px;
}

.g-inspect .group-icons svg:last-child {
  margin-left: 5px;
}

.g-inspect .group-label {
  margin-right: 5px;
}

.g-select .group-icons {
  margin-right: 3px;
}

.g-select .group-label {
  margin-right: 3px;
}

.g-deform .group-icons {
  padding-left: 10px;
  padding-top: 0;
  margin-top: -3px;
  height: 52px;
}

.deform-item {
  margin-top: 12px;
  width: 33px;
  font-size: 12px;
  line-height: 14px;
  color: #666;
}

.deform-item svg,
.deform-on svg {
  display: block;
}

.deform-item span {
  display: block;
  margin-top: 5px;
}

.deform-half {
  margin: 16px 10px 0 18px;
}

.deform-on {
  width: 48px;
  height: 48px;
  padding-top: 3px;
  background: #1596d4;
  color: #eee;
  font-size: 13px;
  line-height: 16px;
}

.deform-on span {
  display: block;
  margin: 1px 0 0 6px;
}

/* viewport */
.viewport {
  position: relative;
  flex: 1;
  overflow: hidden;
}

.scene {
  display: block;
}

.ghost ellipse {
  fill: none;
  stroke: #888;
  stroke-width: 1;
}

.cube-label {
  font: bold 11px "Liberation Sans", sans-serif;
  fill: #9a9a9a;
}

.cube-small {
  font-size: 9px;
}

.xyz {
  font: bold 11px "Liberation Mono", monospace;
  fill: #777;
  text-anchor: middle;
}

.axis {
  font: 13px "Liberation Sans", sans-serif;
}

.axis-y { fill: #66e266; }
.axis-x { fill: #f47a7a; }

/* browser and comments */
.panel {
  position: absolute;
  left: 5px;
  width: 374px;
}

.browser { top: 5px; }
.comments { top: 869px; }

.panel-head {
  height: 30px;
  padding: 0 13px 0 7px;
  background: #f2f2f2;
  border: 1px solid #cfcfcf;
  display: flex;
  align-items: center;
  font-size: 13.6px;
  color: #666;
}

.panel-head svg {
  margin-right: 11px;
}

.comments .panel-head {
  padding-left: 30px;
}

.round-btn {
  margin-left: auto;
  width: 12px;
  height: 12px;
  border-radius: 50%;
  background: #333;
  color: #fff;
  font: bold 12px/11px "Liberation Sans", sans-serif;
  text-align: center;
}

.tree {
  margin-top: 8px;
}

.row {
  height: 25px;
  margin-bottom: 5px;
  display: flex;
  align-items: center;
}

.d0 { padding-left: 23px; }
.d1 { padding-left: 46px; }
.d2 { padding-left: 69px; }
.d3 { padding-left: 91px; }

.toggle {
  width: 9px;
  margin-right: 13px;
  flex: none;
}

.chip {
  height: 25px;
  display: flex;
  align-items: center;
  background: rgba(240, 240, 240, 0.92);
  font-size: 13.7px;
  color: #4d4d4d;
}

.cell {
  width: 31px;
  height: 25px;
  padding-right: 3px;
  flex: none;
  display: flex;
  align-items: center;
  justify-content: center;
  border-right: 1px solid rgba(255, 255, 255, 0.6);
}

.text {
  padding: 0 14px 0 10px;
  white-space: nowrap;
}

.chip-dark {
  height: 23px;
  display: flex;
  align-items: center;
  background: #8a8a8a;
  color: #fff;
}

.chip-dark .cell {
  height: 23px;
  border-right-color: rgba(255, 255, 255, 0.2);
}

.chip-dark .text {
  padding: 0 12px 0 11px;
}

.chip-dark .load-text {
  padding-right: 10px;
}

.bold {
  font-weight: bold;
  font-size: 13.6px;
}

.chip-study {
  padding: 1px 0 1px 2px;
}

.chip-study .chip-dark {
  background: #7c7c7c;
}

.chip-study .cell {
  width: 30px;
}

.chip-study .text {
  padding-right: 14px;
}

/* probes */
.probe {
  position: absolute;
  height: 25px;
  border-radius: 11px;
  font-size: 15px;
  line-height: 25px;
  text-align: center;
  color: #111;
}

.probe-min {
  left: 732px;
  top: 264px;
  width: 149px;
  background: #e95050;
}

.probe-max {
  left: 1051px;
  top: 262px;
  width: 148px;
  background: #8ec64a;
}

/* collapsed panels on the right */
.side-tabs {
  position: absolute;
  left: 1855px;
  top: 155px;
  display: flex;
  align-items: flex-start;
  gap: 5px;
}

.side-tab {
  width: 28px;
  padding: 8px 0 15px;
  background: #f0f0f0;
  display: flex;
  flex-direction: column;
  align-items: center;
  justify-content: space-between;
}

.side-tab svg {
  margin-right: 4px;
}

.tab-details { height: 228px; }
.tab-setup { height: 203px; }

.side-tab span {
  writing-mode: vertical-rl;
  transform: rotate(180deg);
  font-size: 11.5px;
  letter-spacing: -0.4px;
  color: #333;
}

/* legend */
.legend-controls {
  position: absolute;
  left: 1589px;
  top: 448px;
  font-size: 13.5px;
  color: #444;
}

.lc-row {
  height: 27px;
  margin-bottom: 11px;
  display: flex;
  align-items: center;
}

.warn {
  width: 39px;
  height: 27px;
  background: #ffa51f;
  color: #fff;
  font: bold 24px/27px "Liberation Sans", sans-serif;
  text-align: center;
}

.lc-select {
  background: #f0f0f0;
}

.lc-load {
  width: 88px;
  height: 27px;
  padding: 0 0 2px 3px;
  display: flex;
  align-items: center;
}

.lc-load .caret {
  margin-left: 3px;
  border-left-width: 3px;
  border-right-width: 3px;
  border-top-width: 4px;
}

.lc-type {
  width: 114px;
  padding: 0 0 2px 3px;
}

.lc-type .caret {
  margin-left: 14px;
  border-left-width: 4px;
  border-right-width: 4px;
}

.lc-tools {
  width: 77px;
  padding-left: 8px;
  gap: 21px;
  background: #f0f0f0;
}

.legend-scale {
  position: absolute;
  left: 1729px;
  top: 443px;
  height: 299px;
  display: flex;
}

.bar {
  width: 25px;
  height: 299px;
  display: flex;
  flex-direction: column;
  box-shadow: 0 0 6px rgba(0, 0, 0, 0.55);
}

.seg-blue { height: 74px; background: #0000ff; }
.seg-green { height: 113px; background: #00ff00; }
.seg-yellow { height: 75px; background: #ffff00; }
.seg-red { height: 37px; background: #ff0000; }

.ticks {
  width: 13px;
  height: 300px;
  background:
    repeating-linear-gradient(to bottom, #777 0, #777 2px, transparent 2px, transparent 37.38px),
    repeating-linear-gradient(to bottom, #999 0, #999 1px, transparent 1px, transparent 18.69px);
}

.labels {
  margin-left: 25px;
  height: 299px;
  display: flex;
  flex-direction: column;
  justify-content: space-between;
  font-size: 14px;
  color: #222;
}

.labels span {
  height: 0;
  line-height: 0;
  white-space: nowrap;
}

.min-mark {
  position: absolute;
  left: 39px;
  top: 238px;
  width: 128px;
  height: 17px;
  padding-left: 50px;
  border-bottom: 1px solid #ffa733;
  font-size: 15px;
  line-height: 16px;
  color: #ffa733;
  white-space: nowrap;
}

.legend-max {
  position: absolute;
  left: 1671px;
  top: 766px;
  width: 142px;
  display: flex;
  justify-content: space-between;
  font-size: 14px;
  line-height: 16px;
  color: #222;
}

/* navigation bar */
.navbar {
  position: absolute;
  left: 831px;
  top: 868px;
  width: 258px;
  height: 30px;
  padding-left: 5px;
  background: #f0f0f0;
  display: flex;
  align-items: center;
}

.navbar .caret {
  border-left-width: 3px;
  border-right-width: 3px;
  border-top-width: 5px;
}

.nav-c1 { margin-left: 6px; }
.nav-look { margin-left: 9px; }
.nav-hand { margin-left: 14px; }
.nav-zoom { margin-left: 14px; }
.nav-fit { margin-left: 12px; }
.nav-c2 { margin-left: 7px; }
.nav-display { margin-left: 9px; }
.nav-c3 { margin-left: 4px; }
.nav-grid { margin-left: 9px; }
.nav-c4 { margin-left: 4px; }
```
